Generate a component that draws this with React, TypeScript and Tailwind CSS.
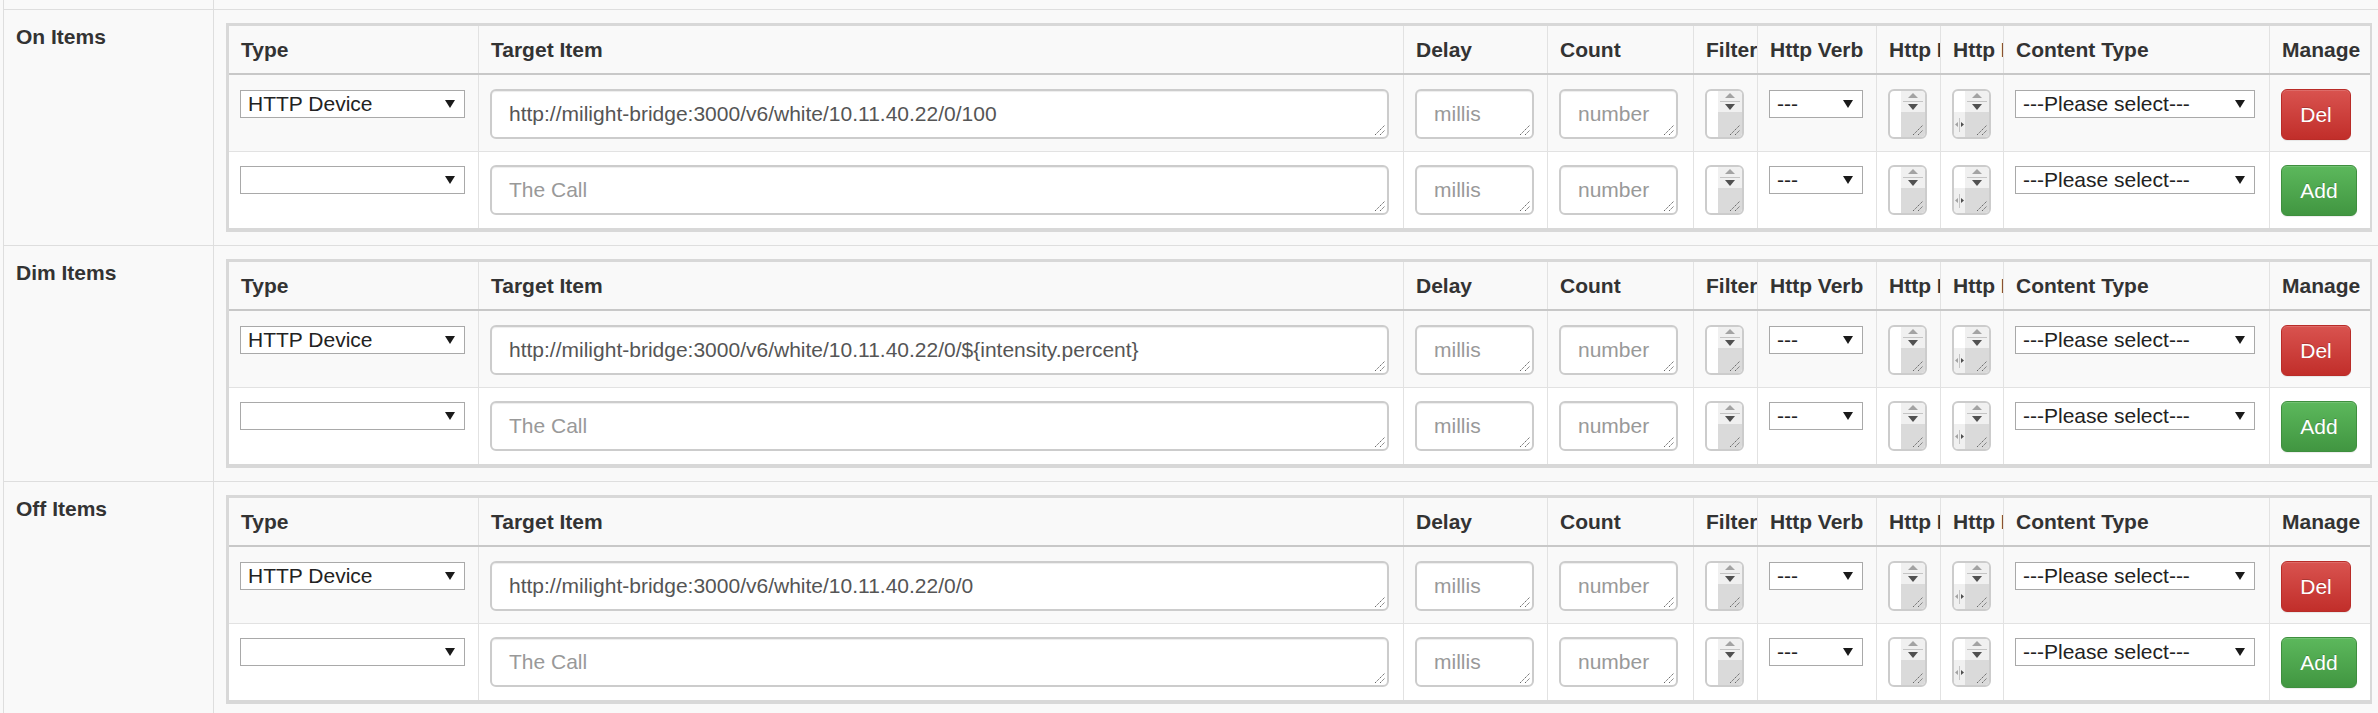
import type { ReactNode } from 'react'

const font = "font-['Liberation_Sans',Arial,sans-serif]"
const cols =
  'grid grid-cols-[249px_925px_144px_146px_64px_119px_64px_63px_266px_101px]'

const headers = [
  'Type',
  'Target Item',
  'Delay',
  'Count',
  'Filter',
  'Http Verb',
  'Http Headers',
  'Http Body',
  'Content Type',
  'Manage'
]

const sections = [
  { label: 'On Items', url: 'http://milight-bridge:3000/v6/white/10.11.40.22/0/100' },
  {
    label: 'Dim Items',
    url: 'http://milight-bridge:3000/v6/white/10.11.40.22/0/${intensity.percent}'
  },
  { label: 'Off Items', url: 'http://milight-bridge:3000/v6/white/10.11.40.22/0/0' }
]

// little triangle used by the fake selects
function DownArrow() {
  return (
    <svg width="10" height="8" viewBox="0 0 10 8">
      <path d="M0 0 H10 L5 8 Z" fill="#1a1a1a" />
    </svg>
  )
}

function Grip() {
  return (
    <svg width="12" height="12" viewBox="0 0 12 12" className="absolute bottom-[1px] right-[1px]">
      <path d="M1 11 L11 1 M6 11 L11 6" stroke="#666" strokeWidth="1" strokeDasharray="1.5 0.8" />
    </svg>
  )
}

function FakeSelect({ className, value }: { className: string; value?: string }) {
  return (
    <div
      className={`mt-px flex h-[28px] items-center justify-between border border-[#a9a9a9] bg-white pl-[7px] pr-[9px] text-[21px] text-[#222] ${className}`}
    >
      <span className="whitespace-nowrap">{value}</span>
      <DownArrow />
    </div>
  )
}

function TextBox({
  className,
  value,
  placeholder
}: {
  className: string
  value?: string
  placeholder?: string
}) {
  return (
    <div
      className={`relative h-[50px] overflow-hidden whitespace-nowrap rounded-[6px] border-2 border-[#ccc] bg-white pl-[17px] pt-[8px] text-[21px] leading-[30px] shadow-[inset_0_1px_1px_rgba(0,0,0,0.075)] ${className}`}
    >
      {value ? (
        <span className="text-[#555]">{value}</span>
      ) : (
        <span className="text-[#999]">{placeholder}</span>
      )}
      <Grip />
    </div>
  )
}

// squeezed textarea showing only its scrollbars
function ScrollBox({ hscroll }: { hscroll?: boolean }) {
  return (
    <div className="flex h-[50px] w-[39px] overflow-hidden rounded-[6px] border-2 border-[#ccc] bg-white">
      <div className="flex w-[11px] flex-col">
        <div className="flex-1" />
        {hscroll && (
          <div className="flex h-[25px] items-center gap-[1px] bg-[#f0f0f0] pl-[1px]">
            <svg width="3" height="5" viewBox="0 0 3 5">
              <path d="M3 0 V5 L0 2.5 Z" fill="#a3a3a3" />
            </svg>
            <div className="h-[14px] w-px bg-[#c4c4c4]" />
            <svg width="3" height="5" viewBox="0 0 3 5">
              <path d="M0 0 V5 L3 2.5 Z" fill="#505050" />
            </svg>
          </div>
        )}
      </div>
      <div className="flex w-[24px] flex-col">
        <div className="flex h-[21px] flex-col items-center bg-[#f0f0f0] pt-[2px]">
          <svg width="10" height="5" viewBox="0 0 10 5">
            <path d="M0 5 L5 0 L10 5 Z" fill="#a3a3a3" />
          </svg>
          <div className="mt-[3px] h-px w-[20px] bg-[#c4c4c4]" />
          <svg width="10" height="6" viewBox="0 0 10 6" className="mt-[2px]">
            <path d="M0 0 H10 L5 6 Z" fill="#505050" />
          </svg>
        </div>
        <div className="relative flex-1 bg-[#dadada]">
          <Grip />
        </div>
      </div>
    </div>
  )
}

function Btn({ kind }: { kind: 'del' | 'add' }) {
  const look =
    kind === 'del'
      ? 'w-[70px] border-[#b92c28] bg-[linear-gradient(to_bottom,#d9534f,#c12e2a)]'
      : 'w-[76px] border-[#3e8f3e] bg-[linear-gradient(to_bottom,#5cb85c,#419641)]'
  return (
    <div
      className={`flex h-[51px] items-center justify-center rounded-[6px] border text-[21px] text-white shadow-[inset_0_1px_0_rgba(255,255,255,0.15),0_1px_1px_rgba(0,0,0,0.075)] [text-shadow:0_-1px_0_rgba(0,0,0,0.2)] ${look}`}
    >
      {kind === 'del' ? 'Del' : 'Add'}
    </div>
  )
}

function Cell({ i, children }: { i: number; children?: ReactNode }) {
  return <div className={`pl-[11px] ${i > 0 ? 'border-l border-[#e2e2e2]' : ''}`}>{children}</div>
}

function ItemRow({ url, first }: { url?: string; first: boolean }) {
  const cells: ReactNode[] = [
    <FakeSelect className="w-[225px]" value={url ? 'HTTP Device' : ''} />,
    <TextBox className="w-[899px]" value={url} placeholder="The Call" />,
    <TextBox className="w-[119px]" placeholder="millis" />,
    <TextBox className="w-[119px]" placeholder="number" />,
    <ScrollBox />,
    <FakeSelect className="w-[94px]" value="---" />,
    <ScrollBox />,
    <ScrollBox hscroll />,
    <FakeSelect className="w-[240px]" value="---Please select---" />,
    <Btn kind={first ? 'del' : 'add'} />
  ]
  return (
    <div
      className={`${cols} ${
        first ? 'h-[77px] border-b border-[#e2e2e2] bg-[#f9f9f9] [&>div]:pt-[14px]' : 'h-[76px] bg-white [&>div]:pt-[13px]'
      }`}
    >
      {cells.map((c, i) => (
        <Cell key={i} i={i}>
          {c}
        </Cell>
      ))}
    </div>
  )
}

function ItemsTable({ url }: { url: string }) {
  return (
    <div className="w-[2146px] border-b-[4px] border-l-[3px] border-r-[2px] border-t-[3px] border-[#d8d8d8]">
      <div className={`${cols} h-[49px] border-b-2 border-[#c8c8c8] bg-[#f9f9f9]`}>
        {headers.map((h, i) => (
          <div
            key={h}
            className={`flex items-center overflow-hidden whitespace-nowrap pl-3 text-[21px] font-bold text-[#333] ${
              i > 0 ? 'border-l border-[#e2e2e2]' : ''
            }`}
          >
            {h}
          </div>
        ))}
      </div>
      <ItemRow url={url} first />
      <ItemRow first={false} />
    </div>
  )
}

export default function App() {
  return (
    <div className={`min-h-screen w-[2378px] overflow-hidden bg-[#f9f9f9] pl-[3px] ${font}`}>
      <div className="border-l border-[#dedede]">
        <div className="grid h-[9px] grid-cols-[209px_1fr]">
          <div />
          <div className="border-l border-[#dedede]" />
        </div>
        {sections.map(s => (
          <div key={s.label} className="grid grid-cols-[209px_1fr] border-t border-[#dedede]">
            <div className="pl-3 pt-3 text-[21px] font-bold leading-[30px] text-[#333]">{s.label}</div>
            <div className="border-l border-[#dedede] pb-[13px] pl-3 pt-[13px]">
              <ItemsTable url={s.url} />
            </div>
          </div>
        ))}
      </div>
    </div>
  )
}
